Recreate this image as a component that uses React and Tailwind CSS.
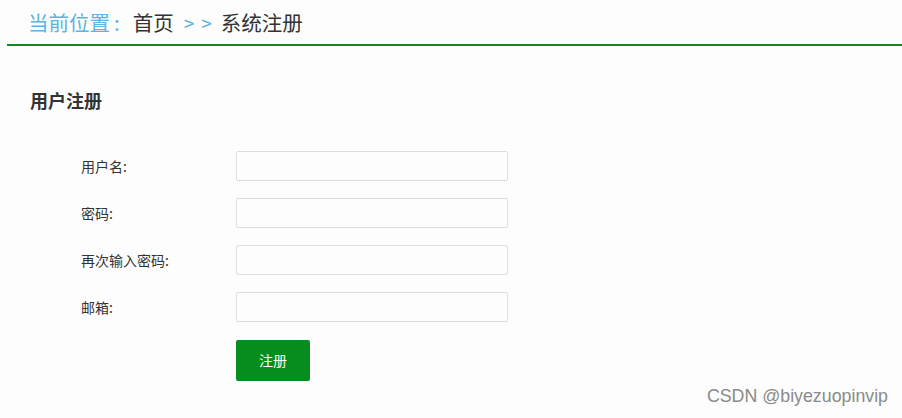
export default function App() {
  const fields = ['用户名:', '密码:', '再次输入密码:', '邮箱:'];

  return (
    <div className="relative w-[902px] h-[418px] bg-[#fcfdfc] overflow-hidden" style={{ fontFamily: '"Noto Sans CJK SC", "Noto Sans", sans-serif' }}>
      {/* Breadcrumb */}
      <div className="ml-[7px] h-[46px] border-b-2 border-[#0a8c22]">
        <div className="flex items-center h-[44px] pl-[21px] text-[20.5px] leading-none">
          <span className="text-[#5db3e4]">当前位置</span>
          <span className="text-[#5db3e4] ml-[4px] mr-[13px]">:</span>
          <span className="text-[#333]">首页</span>
          <span className="flex gap-[7px] text-[#5db3e4] ml-[10px] mr-[9px] text-[19px]">
            <span>&gt;</span>
            <span>&gt;</span>
          </span>
          <span className="text-[#333]">系统注册</span>
        </div>
      </div>

      {/* Title */}
      <h2 className="mt-[42px] ml-[30px] text-[18px] font-bold text-[#333] leading-[24px]">用户注册</h2>

      {/* Form */}
      <div className="mt-[39px] ml-[81px] flex flex-col gap-[17px]">
        {fields.map((f) => (
          <div key={f} className="flex items-center">
            <label className="w-[155px] text-[14px] text-[#333]">{f}</label>
            <input className="w-[272px] h-[30px] bg-[#fdfdfd] border border-[#dedede] rounded-[2px] outline-none px-2 text-[13px]" />
          </div>
        ))}
        <div className="flex mt-[1px]">
          <div className="w-[155px]" />
          <button className="w-[74px] h-[41px] bg-[#068d1e] text-white text-[14px] rounded-[2px]">注册</button>
        </div>
      </div>

      {/* Watermark */}
      <div className="absolute right-[14px] bottom-[8px] text-[17.8px] text-[#8a8a8a]" style={{ fontFamily: '"Liberation Sans", Arial, sans-serif' }}>
        CSDN @biyezuopinvip
      </div>
    </div>
  );
}
